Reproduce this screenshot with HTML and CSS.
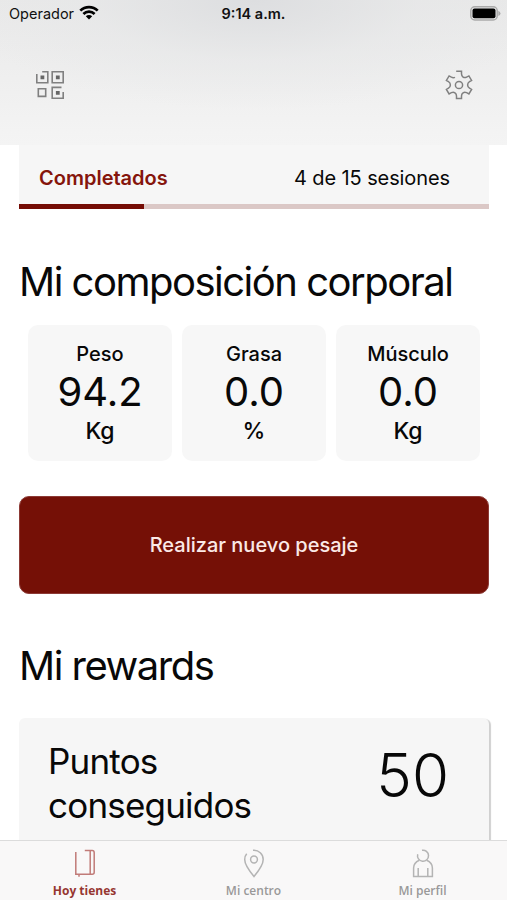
FILE: index.html
```
<!DOCTYPE html>
<html lang="es">

<head>
  <meta charset="UTF-8">
  <meta name="viewport" content="width=device-width, initial-scale=1.0">
  <title>Hoy tienes</title>
  <link rel="stylesheet" href="styles.css">
</head>

<body>

  <header>
    <div class="status">
      <div class="carrier">
        <span>Operador</span>
        <svg width="20" height="15" viewBox="0 0 20 15">
          <g fill="none" stroke="#000" stroke-width="2.7">
            <path d="M1.300 5.600a12.400 12.400 0 0 1 17.400 0"/>
            <path d="M4.400 9a8 8 0 0 1 11.200 0"/>
          </g>
          <path d="M6.800 11.300a4.600 4.600 0 0 1 6.400 0L10 14.500z"/>
        </svg>
      </div>
      <span class="time">9:14 a.m.</span>
      <svg class="battery" width="31" height="15" viewBox="0 0 31 15">
        <rect x=".8" y=".8" width="26.4" height="13.2" rx="4" fill="none" stroke="#aaa" stroke-width="1.5"/>
        <rect x="2.5" y="2.5" width="23" height="9.8" rx="2"/>
        <path d="M28.3 4.8q2.2 1 2.2 2.6t-2.2 2.6z" fill="#aaa"/>
      </svg>
    </div>
    <div class="actions">
      <svg width="30" height="30" viewBox="0 0 30 30" fill="none" stroke="#808080" stroke-width="1.6">
        <path d="M1.8 4v8.700h11V1.800H7.200M17.200 1.800h11v10.900h-11zM3.300 18.800h7.400v7.600H3.300zM26.500 17.400h-9.300v10.900h11V22"/>
        <path d="M5.500 5.500h3.800v3.700H5.500zM20.900 5.500h3.800v3.700h-3.800zM20.900 21h3.800v3.700h-3.800z" fill="#666" stroke="none"/>
      </svg>
      <svg width="28" height="30" viewBox="0 0 28 30" fill="none" stroke="#808080" stroke-width="1.5">
        <circle cx="14" cy="15" r="3.6"/>
        <path d="M11.200 1.300h5.300v2.400c0 3 2.500 4.700 5.100 3.400l2.300-1.200 2.700 4.500-2.100 1.300c-2.500 1.500-2.500 4.900 0 6.400l2.100 1.300-2.700 4.500-2.300-1.200c-2.600-1.300-5.100.4-5.100 3.400v2.500h-5v-2.500c0-3-2.500-4.700-5.100-3.400l-2.300 1.200-2.700-4.500 2.100-1.300c2.500-1.500 2.500-4.900 0-6.400l-2.100-1.300 2.700-4.500 2.300 1.300c1.400.7 2.600.6 3.600.1"/>
      </svg>
    </div>
  </header>

  <main>
    <section class="sessions">
      <div class="sessions-text">
        <strong>Completados</strong>
        <span>4 de 15 sesiones</span>
      </div>
      <div class="progress"><div class="bar" style="width: 26.67%"></div></div>
    </section>

    <h2>Mi composición corporal</h2>
    <div class="stats">
      <div class="stat">
        <span class="label">Peso</span>
        <span class="value">94.2</span>
        <span class="unit">Kg</span>
      </div>
      <div class="stat">
        <span class="label">Grasa</span>
        <span class="value">0.0</span>
        <span class="unit">%</span>
      </div>
      <div class="stat">
        <span class="label">Músculo</span>
        <span class="value">0.0</span>
        <span class="unit">Kg</span>
      </div>
    </div>

    <button>Realizar nuevo pesaje</button>

    <h2 class="rewards-title">Mi rewards</h2>
    <section class="rewards">
      <p>Puntos conseguidos</p>
      <span class="points">50</span>
    </section>
  </main>

  <nav>
    <a class="tab active">
      <svg width="22" height="29" viewBox="0 0 22 29" fill="none" stroke="#c17b78" stroke-width="1.5">
        <path d="M1.800 3v22.200h16.400q2 0 2-2V3.800q0-2.200-2-2.200h-7.400M16.200 1.600v23.600M5 25.200v2.600"/>
      </svg>
      <span>Hoy tienes</span>
    </a>
    <a class="tab">
      <svg width="22" height="29" viewBox="0 0 22 29" fill="none" stroke="#b4b4b4" stroke-width="1.5">
        <path d="M10 1.300c5.800-.4 10.200 3.700 10.200 9.200 0 5.500-4.600 11.500-9.200 17C6.400 22 1.700 16 1.700 10.500c0-2.300.7-4.200 2-5.700"/>
        <circle cx="11" cy="10.500" r="3.400"/>
      </svg>
      <span>Mi centro</span>
    </a>
    <a class="tab">
      <svg width="22" height="29" viewBox="0 0 22 29" fill="none" stroke="#b4b4b4" stroke-width="1.5">
        <path d="M5.700 5.300A5.500 5.500 0 1 0 10 1.300"/>
        <path d="M7.300 11.200C3.800 12.700 1.600 15.600 1.600 19v8.600h18.800V19c0-3.400-2.200-6.300-5.700-7.800M6.200 19v8.600M15.800 19v8.600"/>
      </svg>
      <span>Mi perfil</span>
    </a>
  </nav>

</body>

</html>
```
FILE: styles.css
```
* {
  box-sizing: border-box;
}

body {
  display: flex;
  flex-direction: column;
  height: 900px;
  margin: 0;
  overflow: hidden;
  font-family: Inter, "Liberation Sans", sans-serif;
  background: #fff;
  color: #080808;
}

header {
  height: 145px;
  flex-shrink: 0;
  background: radial-gradient(ellipse 300px 110px at 50% 0, #dddee0, rgba(229, 230, 231, 0.5) 55%, transparent), linear-gradient(#e9e9e9, #f4f4f4);
}

.status {
  display: grid;
  grid-template-columns: 1fr auto 1fr;
  align-items: center;
  height: 27px;
  padding: 0 6px 0 9px;
  font-size: 14.5px;
  color: #111;
}

.carrier {
  display: flex;
  align-items: center;
  gap: 5px;
}

.carrier svg {
  margin-bottom: 2px;
}

.time {
  margin-right: 3px;
  font-weight: 600;
}

.battery {
  justify-self: end;
}

.actions {
  display: flex;
  justify-content: space-between;
  padding: 43px 34px 0 35px;
}

main {
  flex: 1;
  min-height: 0;
  overflow: hidden;
  padding: 0 18px 0 19px;
}

.sessions {
  background: #f6f6f6;
}

.sessions-text {
  display: flex;
  justify-content: space-between;
  height: 59px;
  padding: 21px 39px 0 20px;
  font-size: 20px;
  line-height: 25px;
}

.sessions-text span {
  letter-spacing: -0.1px;
}

.sessions strong {
  font-weight: 600;
  color: #85150c;
}

.progress {
  height: 5px;
  background: #dbc8c6;
}

.bar {
  height: 5px;
  background: #750c05;
}

h2 {
  margin: 49px 0 0;
  font-size: 40px;
  font-weight: 400;
  line-height: 48px;
  letter-spacing: -1.5px;
}

.stats {
  display: grid;
  grid-template-columns: repeat(3, 1fr);
  gap: 10px;
  margin-top: 19px;
  padding: 0 9px;
}

.stat {
  display: flex;
  flex-direction: column;
  align-items: center;
  height: 136px;
  padding-top: 17px;
  background: #f7f7f7;
  border-radius: 10px;
}

.label {
  font-size: 20px;
  font-weight: 500;
  line-height: 25px;
}

.value {
  font-size: 40px;
  line-height: 49px;
}

.unit {
  font-size: 23px;
  font-weight: 500;
  line-height: 30px;
}

button {
  display: block;
  width: 100%;
  height: 98px;
  margin-top: 35px;
  border: 1px solid #8c3a35;
  border-radius: 10px;
  background: #751006;
  color: #fbe9e6;
  font-family: inherit;
  font-size: 20px;
  font-weight: 500;
}

.rewards-title {
  margin-top: 48px;
}

.rewards {
  display: flex;
  justify-content: space-between;
  height: 190px;
  margin-top: 28px;
  padding: 21px 40px 0 29px;
  background: #f6f6f6;
  border-radius: 6px;
  box-shadow: 2px 1px 1px #d0d0d0;
}

.rewards p {
  width: 230px;
  margin: 0;
  font-size: 35px;
  line-height: 44px;
  letter-spacing: -0.8px;
}

.points {
  font-size: 60px;
  font-weight: 300;
  line-height: 72px;
}

nav {
  display: grid;
  grid-template-columns: repeat(3, 1fr);
  flex-shrink: 0;
  height: 60px;
  border-top: 1px solid #dcdcdc;
  background: #f9f8f8;
}

.tab {
  display: flex;
  flex-direction: column;
  align-items: center;
  gap: 5px;
  padding-top: 8px;
  font-family: "Open Sans", sans-serif;
  font-size: 12px;
  font-weight: 600;
  line-height: 15px;
  color: #999;
}

.active {
  font-weight: 700;
  color: #963631;
}
```
